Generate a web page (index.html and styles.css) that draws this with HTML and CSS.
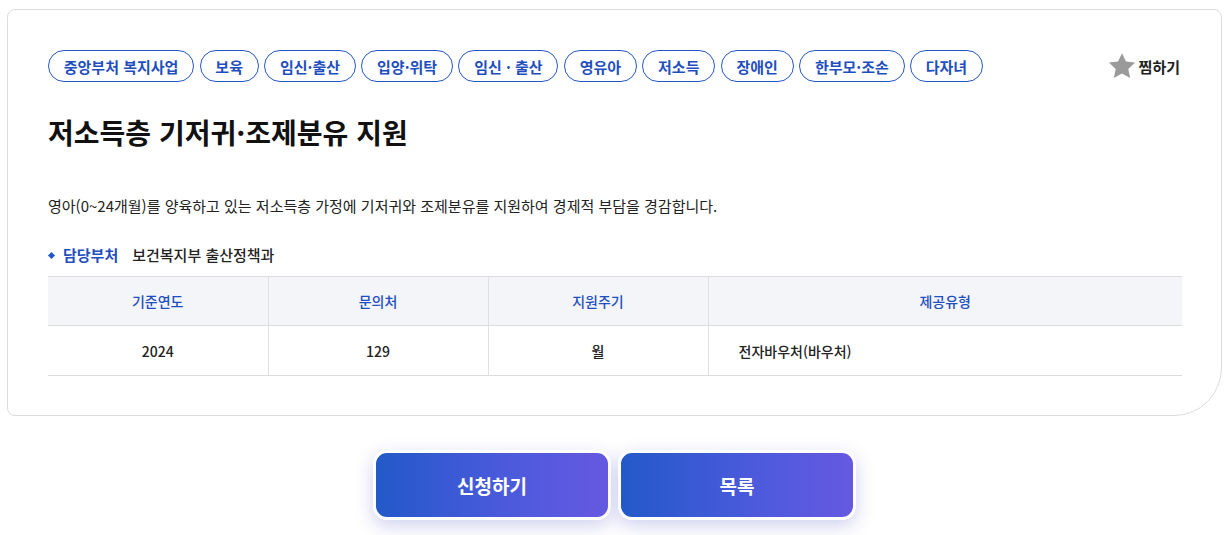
FILE: index.html
```html
<!DOCTYPE html>
<html lang="ko">
<head>
<meta charset="utf-8">
<link rel="stylesheet" href="styles.css">
</head>
<body>
<div class="page">
  <section class="card">
    <div class="top">
      <ul class="tags">
        <li class="tag">중앙부처 복지사업</li>
        <li class="tag">보육</li>
        <li class="tag">임신·출산</li>
        <li class="tag">입양·위탁</li>
        <li class="tag">임신 · 출산</li>
        <li class="tag">영유아</li>
        <li class="tag">저소득</li>
        <li class="tag">장애인</li>
        <li class="tag">한부모·조손</li>
        <li class="tag">다자녀</li>
      </ul>
      <button class="fav" type="button">
        <svg class="star" width="28" height="28" viewBox="0 0 24 24" aria-hidden="true"><path d="M12 1l3.4 7.2 7.8.9-5.8 5.4 1.6 7.8L12 18.4l-7 3.9 1.6-7.8L.8 9.1l7.8-.9z" fill="#9a9a9a"/></svg>
        <span>찜하기</span>
      </button>
    </div>
    <h1 class="title">저소득층 기저귀·조제분유 지원</h1>
    <p class="desc">영아(0~24개월)를 양육하고 있는 저소득층 가정에 기저귀와 조제분유를 지원하여 경제적 부담을 경감합니다.</p>
    <div class="dept"><span class="dept-label">담당부처</span><span class="dept-value">보건복지부 출산정책과</span></div>
    <table class="info">
      <thead>
        <tr><th class="c1">기준연도</th><th class="c2">문의처</th><th class="c3">지원주기</th><th class="c4">제공유형</th></tr>
      </thead>
      <tbody>
        <tr><td>2024</td><td>129</td><td>월</td><td class="left">전자바우처(바우처)</td></tr>
      </tbody>
    </table>
  </section>
  <div class="actions">
    <button class="btn" type="button">신청하기</button>
    <button class="btn" type="button">목록</button>
  </div>
</div>
</body>
</html>
```
FILE: styles.css
```css
* { box-sizing: border-box; }
html, body { margin: 0; padding: 0; background: #fff; }
body {
  font-family: "Noto Sans CJK KR", "Noto Sans", sans-serif;
  color: #222;
}
.page { padding: 9px 8px 24px 7px; }
.card {
  width: 1215px;
  height: 407px;
  border: 1px solid #dcdcdc;
  border-radius: 8px 8px 48px 8px;
  padding: 40px 39px 0 40px;
}
.top { display: flex; justify-content: space-between; align-items: center; }
.tags { list-style: none; margin: 0; padding: 0; display: flex; gap: 5.5px; }
.tag {
  height: 32px;
  border: 1px solid #2456c8;
  border-radius: 16px;
  padding: 0 14.75px;
  color: #1f4fbf;
  font-size: 15px;
  font-weight: 700;
  display: flex; align-items: center;
  line-height: 1;
}
.fav {
  display: flex; align-items: center; gap: 3px;
  background: none; border: 0; padding: 0; margin-right: 2px;
  font-family: inherit; font-size: 15px; font-weight: 700; color: #222;
}
.title {
  margin: 30px 0 0;
  font-size: 28px; font-weight: 700; color: #111;
  line-height: 40px;
}
.desc {
  margin: 44px 0 0;
  font-size: 15px; line-height: 20px; color: #222;
}
.dept {
  margin-top: 29px;
  display: flex; align-items: center;
  font-size: 15px; line-height: 20px;
}
.dept-label {
  color: #1f4fbf; font-weight: 700;
  display: flex; align-items: center;
  margin-right: 14px;
}
.dept-label::before {
  content: "";
  width: 5px; height: 5px; background: #2456c8;
  transform: rotate(45deg);
  margin: 0 9px 0 1px;
}
.dept-value { color: #222; font-weight: 500; }
.info {
  margin-top: 11px;
  width: 1134px;
  border-collapse: collapse;
  border-top: 1px solid #dcdcdc;
  border-bottom: 1px solid #dcdcdc;
  font-size: 14px;
}
.info th, .info td {
  height: 49px;
  text-align: center;
  border-left: 1px solid #e0e0e0;
  padding: 0;
}
.info th:first-child, .info td:first-child { border-left: 0; }
.info th { background: #f4f5f9; color: #1f4fbf; font-weight: 500; border-bottom: 1px solid #dcdcdc; }
.info td { color: #222; font-weight: 500; height: 50px; }
.info td.left { text-align: left; padding-left: 30px; }
.c1, .c2, .c3 { width: 220px; }
.actions {
  display: flex; justify-content: center; gap: 7px;
  margin-top: 34px;
}
.btn {
  width: 238px; height: 70px;
  border: 3px solid #fff;
  border-radius: 14px;
  background: linear-gradient(90deg, #2359c9 0%, #4a5adb 55%, #6659e1 100%);
  color: #fff;
  font-family: inherit; font-size: 19px; font-weight: 700;
  box-shadow: 0 6px 18px rgba(90, 90, 200, 0.28);
}
```
